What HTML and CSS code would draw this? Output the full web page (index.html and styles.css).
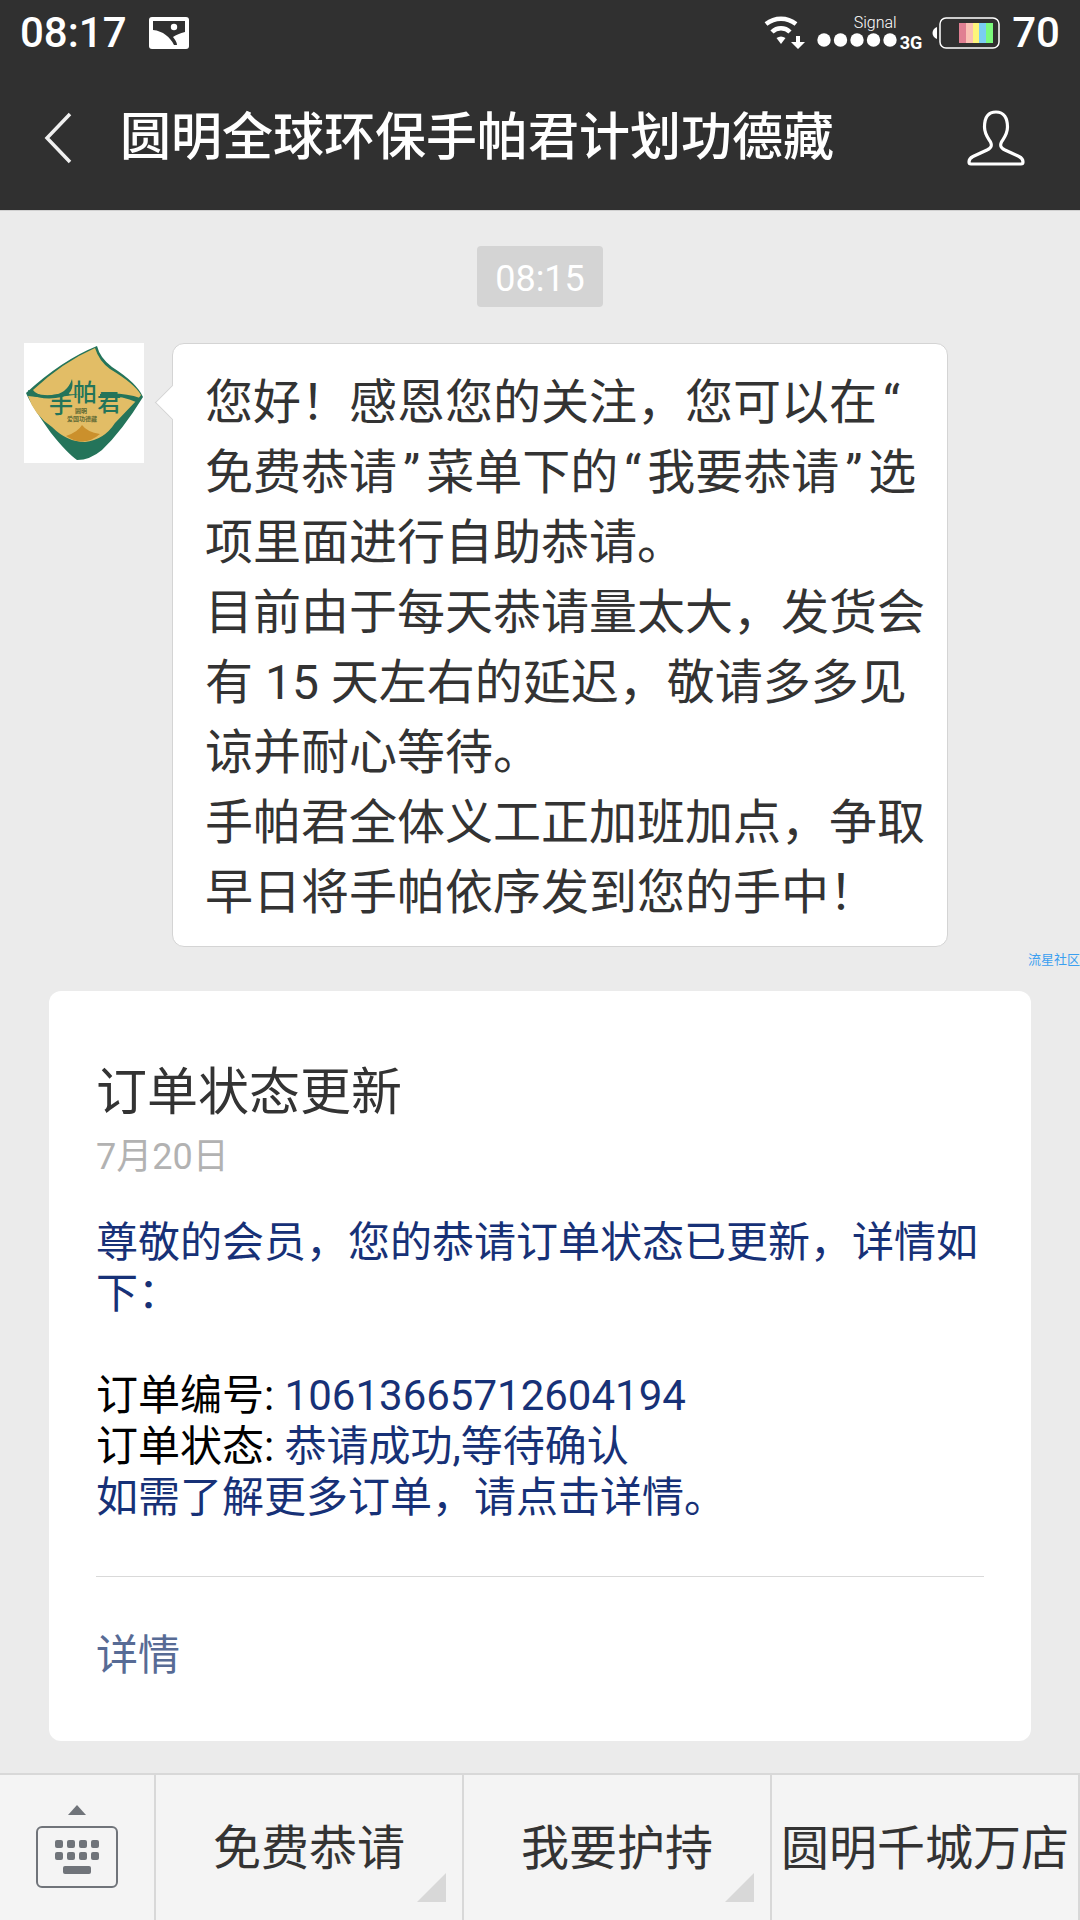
FILE: index.html
```html
<!DOCTYPE html>
<html lang="zh-CN">
<head>
    <meta charset="utf-8">
    <meta name="viewport" content="width=device-width">
    <title>圆明全球环保手帕君计划功德藏</title>
    <link rel="stylesheet" href="styles.css">
</head>
<body>

<header>
    <div class="status">
        <span class="clock">08:17</span>
        <svg class="icon-photo" width="40" height="32" viewBox="0 0 40 32">
            <rect width="40" height="32" rx="3" fill="#fff"/>
            <path d="M4 4H36V15C31 16 27 18 24 20C26 23 28 25 28 28H25C21 20 14 14 4 13Z" fill="#303030"/>
            <circle cx="25" cy="10" r="3.2" fill="#fff"/>
        </svg>
        <div class="status-right">
            <svg width="42" height="34" viewBox="0 0 42 34">
                <path d="M2 8C11 1 23 1 32 8" fill="none" stroke="#fff" stroke-width="4.5"/>
                <path d="M8 16C13 11 21 11 26 16" fill="none" stroke="#fff" stroke-width="4.5"/>
                <path d="M12.5 22Q17 19 21.5 22L17 28Z" fill="#fff"/>
                <path d="M32 20H36V26H41L34 33L27 26H32Z" fill="#fff"/>
            </svg>
            <div class="signal">
                <span class="signal-name">Signal</span>
                <svg width="80" height="14" viewBox="0 0 80 14" fill="#fff">
                    <circle cx="7" cy="7" r="6.7"/>
                    <circle cx="23.5" cy="7" r="6.7"/>
                    <circle cx="40" cy="7" r="6.7"/>
                    <circle cx="56.5" cy="7" r="6.7"/>
                    <circle cx="73" cy="7" r="6.7"/>
                </svg>
            </div>
            <span class="net">3G</span>
            <svg width="68" height="32" viewBox="0 0 68 32">
                <path d="M5 10V22C-1 20 -1 12 5 10Z" fill="#fff"/>
                <rect x="8" y="1" width="59" height="30" rx="6" fill="none" stroke="#fff" stroke-width="1.5"/>
                <rect x="27" y="6" width="7" height="20" fill="#e07f92"/>
                <rect x="34" y="6" width="7" height="20" fill="#fac0b4"/>
                <rect x="41" y="6" width="6" height="20" fill="#fdf57a"/>
                <rect x="47" y="6" width="7" height="20" fill="#7acdf2"/>
                <rect x="54" y="6" width="7" height="20" fill="#7bfa7c"/>
            </svg>
            <span class="level">70</span>
        </div>
    </div>
    <div class="titlebar">
        <button class="back" aria-label="返回">
            <svg width="28" height="52" viewBox="0 0 28 52">
                <path d="M26 2L3 26L26 50" fill="none" stroke="#f0f0f0" stroke-width="3.5"/>
            </svg>
        </button>
        <h1>圆明全球环保手帕君计划功德藏</h1>
        <button class="profile" aria-label="公众号资料">
            <svg width="58" height="56" viewBox="0 0 58 56">
                <path d="M29 2C21 2 17.5 8 17.5 17C17.5 24 21 28 23.5 32C25.5 36 24 38 20 40L6 46.5C3 48 2 50 2 52C2 53.5 2.5 54 4 54H54C55.5 54 56 53.5 56 52C56 50 55 48 52 46.5L38 40C34 38 32.5 36 34.5 32C37 28 40.5 24 40.5 17C40.5 8 37 2 29 2Z" fill="none" stroke="#fff" stroke-width="3.2"/>
            </svg>
        </button>
    </div>
</header>

<main>
    <time class="stamp">08:15</time>

    <div class="message">
        <svg class="avatar" viewBox="0 0 120 120">
            <rect width="120" height="120" fill="#fff"/>
            <path d="M73 3Q38 17 2 50Q7 62 27 90Q43 110 53 117Q66 117 78 107Q98 88 119 54Q113 40 88 24Q76 15 73 3Z" fill="#24745a"/>
            <path d="M71 5Q39 19 9 47Q12 51 20 53Q65 48 114 56L117 52Q111 41 86 26Q75 18 71 5Z" fill="#e2bd66"/>
            <path d="M4 53Q10 72 28 84Q43 99 61 99Q80 97 91 80L113 57Q90 50 60 50Q28 57 4 53Z" fill="#e2bd66"/>
            <path d="M42 93Q54 89 58 82Q63 89 76 91Q60 105 42 93Z" fill="#cb902c"/>
            <path d="M4 47Q12 53 28 52Q43 51 48 36Q51 50 38 54Q20 58 4 51Z" fill="#24745a"/>
            <path d="M76 51Q100 49 116 55L112 59Q98 52 76 53Z" fill="#24745a"/>
            <g class="avatar-name">
                <text x="25" y="70">手</text>
                <text x="49" y="58">帕</text>
                <text x="73" y="68">君</text>
            </g>
            <g class="avatar-sub">
                <text x="51" y="70">圆明</text>
                <text x="43" y="78">爱国功德藏</text>
            </g>
        </svg>
        <div class="bubble">
            您好！感恩您的关注，您可以在<span class="quote">“</span><br>
            免费恭请<span class="quote">”</span>菜单下的<span class="quote">“</span>我要恭请<span class="quote">”</span>选<br>
            项里面进行自助恭请。<br>
            目前由于每天恭请量太大，发货会<br>
            有 15 天左右的延迟，敬请多多见<br>
            谅并耐心等待。<br>
            手帕君全体义工正加班加点，争取<br>
            早日将手帕依序发到您的手中！
        </div>
    </div>

    <span class="watermark">流星社区</span>

    <section class="card">
        <h2>订单状态更新</h2>
        <time class="date">7月20日</time>
        <p>尊敬的会员，您的恭请订单状态已更新，详情如下：</p>
        <p>
            <span class="key">订单编号:</span> 10613665712604194<br>
            <span class="key">订单状态:</span> 恭请成功,等待确认<br>
            如需了解更多订单，请点击详情。
        </p>
        <a class="more" href="#">详情</a>
    </section>
</main>

<nav>
    <button class="keyboard" aria-label="键盘">
        <svg width="82" height="84" viewBox="0 0 82 84" fill="#70747a">
            <path d="M41 0L50 10H32Z"/>
            <rect x="1" y="22" width="80" height="60" rx="5" fill="none" stroke="#70747a" stroke-width="2"/>
            <rect x="19" y="35" width="8" height="8" rx="2"/>
            <rect x="31" y="35" width="8" height="8" rx="2"/>
            <rect x="43" y="35" width="8" height="8" rx="2"/>
            <rect x="55" y="35" width="8" height="8" rx="2"/>
            <rect x="19" y="47" width="8" height="8" rx="2"/>
            <rect x="31" y="47" width="8" height="8" rx="2"/>
            <rect x="43" y="47" width="8" height="8" rx="2"/>
            <rect x="55" y="47" width="8" height="8" rx="2"/>
            <rect x="27" y="61" width="28" height="8" rx="2"/>
        </svg>
    </button>
    <button class="tab has-menu">免费恭请</button>
    <button class="tab has-menu">我要护持</button>
    <button class="tab">圆明千城万店</button>
</nav>

</body>
</html>
```
FILE: styles.css
```css
* {
    box-sizing: border-box;
}

body {
    margin: 0;
    min-height: 100vh;
    display: flex;
    flex-direction: column;
    font-family: Roboto, "Noto Sans CJK SC", sans-serif;
    background-color: #ebebeb;
    color: #333;
}

button {
    padding: 0;
    border: none;
    background: none;
    font-family: inherit;
    color: inherit;
    cursor: pointer;
}

svg {
    display: block;
    flex: none;
}

/* header */
header {
    background-color: #303030;
    border-bottom: 1px solid #d0d0d0;
    color: #fff;
}

.status {
    display: flex;
    align-items: center;
    height: 66px;
    padding: 0 20px;
}

.clock, .level {
    font-size: 42px;
    font-weight: 500;
    line-height: 66px;
}

.icon-photo {
    margin-left: 22px;
}

.status-right {
    display: flex;
    align-items: center;
    margin-left: auto;
}

.signal {
    display: flex;
    flex-direction: column;
    align-items: flex-end;
    margin-left: 11px;
    padding-bottom: 6px;
}

.signal-name {
    font-size: 16px;
    font-weight: 300;
    line-height: 20px;
}

.net {
    margin: 20px 10px 0 3px;
    font-size: 18px;
    font-weight: 700;
    line-height: 20px;
}

.level {
    margin-left: 12px;
}

.titlebar {
    display: flex;
    align-items: center;
    height: 144px;
    padding: 0 55px 0 44px;
}

h1 {
    flex: 1;
    margin: 0 0 0 48px;
    font-size: 51px;
    font-weight: 500;
    line-height: 72px;
    white-space: nowrap;
}

/* chat */
main {
    flex: 1;
    display: flex;
    flex-direction: column;
}

.stamp {
    align-self: center;
    margin-top: 35px;
    padding: 5px 18px 0;
    border-radius: 4px;
    background-color: #d4d4d4;
    color: #fff;
    font-size: 36px;
    line-height: 56px;
}

.message {
    display: flex;
    align-items: flex-start;
    gap: 28px;
    margin: 36px 132px 0 24px;
}

.avatar {
    width: 120px;
    height: 120px;
}

.avatar-name {
    font-family: "Noto Sans CJK SC", sans-serif;
    font-size: 24px;
    font-weight: 500;
    fill: #24745a;
}

.avatar-sub {
    font-family: "Noto Sans CJK SC", sans-serif;
    font-size: 6px;
    font-weight: 700;
    fill: #5f6a35;
}

.bubble {
    position: relative;
    flex: 1;
    padding: 24px 20px 18px 32px;
    border: 1px solid #d4d4d4;
    border-radius: 12px;
    background-color: #fff;
    font-size: 48px;
    line-height: 70px;
}

.bubble::before {
    content: "";
    position: absolute;
    left: -13px;
    top: 46px;
    width: 24px;
    height: 24px;
    border-left: 1px solid #d4d4d4;
    border-bottom: 1px solid #d4d4d4;
    background-color: #fff;
    transform: rotate(45deg);
}

.quote {
    margin: 0 6px;
}

.watermark {
    align-self: flex-end;
    margin-top: 4px;
    color: #3b9ff0;
    font-size: 13px;
    line-height: 18px;
}

.card {
    margin: 22px 49px 32px;
    padding: 66px 47px 60px 47px;
    border-radius: 12px;
    background-color: #fff;
}

h2 {
    margin: 0;
    font-size: 51px;
    font-weight: 400;
    line-height: 72px;
}

.date {
    display: block;
    margin-bottom: 32px;
    color: #b2b2b2;
    font-size: 36px;
    line-height: 56px;
}

.card p {
    margin: 0 0 51px;
    color: #173177;
    font-size: 42px;
    line-height: 51px;
}

.card .key {
    color: #000;
}

.more {
    display: block;
    margin-top: 53px;
    padding-top: 53px;
    border-top: 1px solid #d9d9d9;
    color: #576b95;
    font-size: 42px;
    line-height: 51px;
    text-decoration: none;
}

/* bottom menu */
nav {
    display: grid;
    grid-template-columns: 156px 1fr 1fr 1fr;
    height: 147px;
    border-top: 2px solid #d8d8d8;
    background-color: #f4f4f4;
}

nav button {
    position: relative;
    border-right: 2px solid #d8d8d8;
}

.keyboard {
    display: flex;
    justify-content: center;
    align-items: center;
    padding-bottom: 2px;
}

.tab {
    padding-bottom: 8px;
    font-size: 48px;
    white-space: nowrap;
}

.has-menu::after {
    content: "";
    position: absolute;
    right: 16px;
    bottom: 18px;
    border-left: 29px solid transparent;
    border-bottom: 29px solid #d8d8d8;
}
```
